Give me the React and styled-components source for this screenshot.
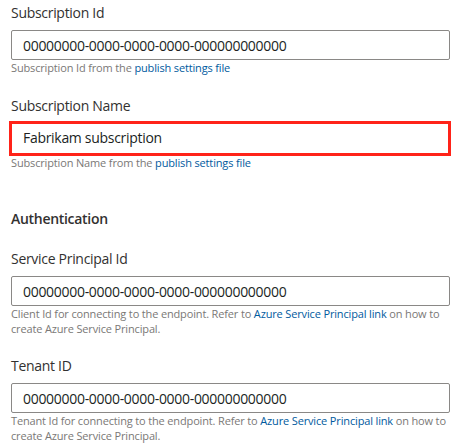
import React from 'react';
import styled, { createGlobalStyle } from 'styled-components';

const GlobalStyle = createGlobalStyle`
    html, body {
        margin: 0;
        padding: 0;
        background: #fff;
    }
    body {
        font-family: 'Open Sans', 'Noto Sans', sans-serif;
        color: #323130;
    }
`;

const Page = styled.div`
    display: flex;
    flex-direction: column;
    padding: 3px 14px 0 11px;
`;

const Field = styled.div`
    display: flex;
    flex-direction: column;
    margin-top: ${({ gap }) => gap || 0}px;
`;

const Label = styled.div`
    font-size: 14px;
    line-height: 20px;
    letter-spacing: -0.3px;
    color: #323130;
    margin-bottom: ${({ red }) => (red ? 5 : 7)}px;
`;

const SectionTitle = styled.div`
    font-size: 14px;
    line-height: 20px;
    font-weight: 600;
    letter-spacing: -0.3px;
    color: #323130;
    margin-top: 39px;
`;

const Input = styled.div`
    box-sizing: border-box;
    height: ${({ red }) => (red ? 35 : 30)}px;
    margin: ${({ red }) => (red ? '0 -1px 0 -2px' : '0')};
    border: ${({ red }) => (red ? '3px solid #ff2319' : '1px solid #8a8886')};
    border-radius: ${({ red }) => (red ? 0 : 2)}px;
    display: flex;
    align-items: center;
    padding: ${({ red }) => (red ? '0 0 1px 11px' : '0 11px')};
    font-size: 14px;
    letter-spacing: -0.3px;
    color: #201f1e;
`;

const Help = styled.div`
    font-size: 11px;
    line-height: 14.5px;
    letter-spacing: -0.15px;
    color: #7a7876;
    margin-top: ${({ tight }) => (tight ? 0 : 1)}px;
`;

const Link = styled.a`
    color: #005a9e;
    text-decoration: none;
`;

const GUID = '00000000-0000-0000-0000-000000000000';

const FormField = ({ label, value, red, gap, children }) => (
    <Field gap={gap}>
        <Label red={red}>{label}</Label>
        <Input red={red}>{value}</Input>
        <Help tight={red}>{children}</Help>
    </Field>
);

export default function App() {
    return (
        <Page>
            <GlobalStyle />
            <FormField label="Subscription Id" value={GUID}>
                Subscription Id from the <Link href="#">publish settings file</Link>
            </FormField>
            <FormField label="Subscription Name" value="Fabrikam subscription" red gap={20}>
                Subscription Name from the <Link href="#">publish settings file</Link>
            </FormField>
            <SectionTitle>Authentication</SectionTitle>
            <FormField label="Service Principal Id" value={GUID} gap={20}>
                Client Id for connecting to the endpoint. Refer to <Link href="#">Azure Service Principal link</Link> on how to create Azure Service Principal.
            </FormField>
            <FormField label="Tenant ID" value={GUID} gap={20}>
                Tenant Id for connecting to the endpoint. Refer to <Link href="#">Azure Service Principal link</Link> on how to create Azure Service Principal.
            </FormField>
        </Page>
    );
}
